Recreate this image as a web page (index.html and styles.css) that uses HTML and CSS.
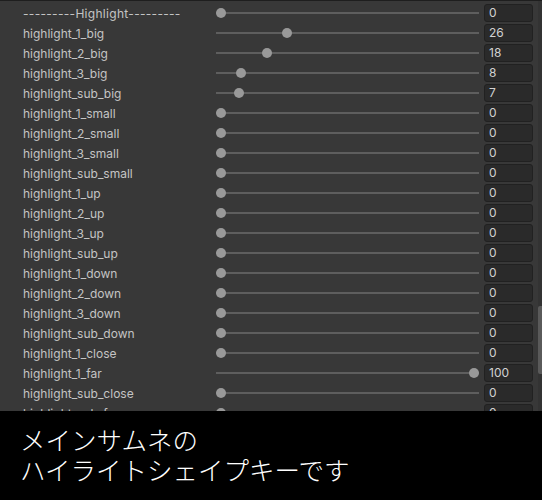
FILE: index.html
```html
<!DOCTYPE html>
<html lang="ja">
<head>
<meta charset="utf-8">
<link rel="stylesheet" href="styles.css">
</head>
<body>
<div class="screen">
  <div class="panel">
    <div class="list">
      <div class="row"><span class="label header">---------Highlight---------</span><div class="slider"><div class="track"></div><div class="thumb" style="--v:0"></div></div><div class="field">0</div></div>
      <div class="row"><span class="label">highlight_1_big</span><div class="slider"><div class="track"></div><div class="thumb" style="--v:26"></div></div><div class="field">26</div></div>
      <div class="row"><span class="label">highlight_2_big</span><div class="slider"><div class="track"></div><div class="thumb" style="--v:18"></div></div><div class="field">18</div></div>
      <div class="row"><span class="label">highlight_3_big</span><div class="slider"><div class="track"></div><div class="thumb" style="--v:8"></div></div><div class="field">8</div></div>
      <div class="row"><span class="label">highlight_sub_big</span><div class="slider"><div class="track"></div><div class="thumb" style="--v:7"></div></div><div class="field">7</div></div>
      <div class="row"><span class="label">highlight_1_small</span><div class="slider"><div class="track"></div><div class="thumb" style="--v:0"></div></div><div class="field">0</div></div>
      <div class="row"><span class="label">highlight_2_small</span><div class="slider"><div class="track"></div><div class="thumb" style="--v:0"></div></div><div class="field">0</div></div>
      <div class="row"><span class="label">highlight_3_small</span><div class="slider"><div class="track"></div><div class="thumb" style="--v:0"></div></div><div class="field">0</div></div>
      <div class="row"><span class="label">highlight_sub_small</span><div class="slider"><div class="track"></div><div class="thumb" style="--v:0"></div></div><div class="field">0</div></div>
      <div class="row"><span class="label">highlight_1_up</span><div class="slider"><div class="track"></div><div class="thumb" style="--v:0"></div></div><div class="field">0</div></div>
      <div class="row"><span class="label">highlight_2_up</span><div class="slider"><div class="track"></div><div class="thumb" style="--v:0"></div></div><div class="field">0</div></div>
      <div class="row"><span class="label">highlight_3_up</span><div class="slider"><div class="track"></div><div class="thumb" style="--v:0"></div></div><div class="field">0</div></div>
      <div class="row"><span class="label">highlight_sub_up</span><div class="slider"><div class="track"></div><div class="thumb" style="--v:0"></div></div><div class="field">0</div></div>
      <div class="row"><span class="label">highlight_1_down</span><div class="slider"><div class="track"></div><div class="thumb" style="--v:0"></div></div><div class="field">0</div></div>
      <div class="row"><span class="label">highlight_2_down</span><div class="slider"><div class="track"></div><div class="thumb" style="--v:0"></div></div><div class="field">0</div></div>
      <div class="row"><span class="label">highlight_3_down</span><div class="slider"><div class="track"></div><div class="thumb" style="--v:0"></div></div><div class="field">0</div></div>
      <div class="row"><span class="label">highlight_sub_down</span><div class="slider"><div class="track"></div><div class="thumb" style="--v:0"></div></div><div class="field">0</div></div>
      <div class="row"><span class="label">highlight_1_close</span><div class="slider"><div class="track"></div><div class="thumb" style="--v:0"></div></div><div class="field">0</div></div>
      <div class="row"><span class="label">highlight_1_far</span><div class="slider"><div class="track"></div><div class="thumb" style="--v:100"></div></div><div class="field">100</div></div>
      <div class="row"><span class="label">highlight_sub_close</span><div class="slider"><div class="track"></div><div class="thumb" style="--v:0"></div></div><div class="field">0</div></div>
      <div class="row"><span class="label">highlight_sub_far</span><div class="slider"><div class="track"></div><div class="thumb" style="--v:0"></div></div><div class="field">0</div></div>
    </div>
    <div class="scrollbar"><div class="scroll-thumb"></div></div>
  </div>
  <div class="caption">
    <p>メインサムネの</p>
    <p>ハイライトシェイプキーです</p>
  </div>
</div>
</body>
</html>
```
FILE: styles.css
```css
* { box-sizing: border-box; }
html, body { margin: 0; padding: 0; background: #000; }
.screen {
  width: 542px;
  height: 500px;
  overflow: hidden;
  display: flex;
  flex-direction: column;
}
.panel {
  height: 411px;
  flex: none;
  background: #383838;
  border-top: 1px solid #1e1e1e;
  display: flex;
  overflow: hidden;
}
.list {
  flex: 1;
  padding-top: 2px;
}
.row {
  height: 20px;
  display: grid;
  grid-template-columns: 188px 263px 49px;
  column-gap: 5px;
  align-items: center;
  padding-left: 23px;
}
.label {
  font-family: Inter, "Liberation Sans", sans-serif;
  font-size: 12px;
  color: #c4c4c4;
  white-space: nowrap;
}
.label.header {
  letter-spacing: 0.3px;
}
.slider {
  position: relative;
  height: 10px;
}
.track {
  position: absolute;
  left: 0;
  right: 0;
  top: 4px;
  height: 2px;
  background: #5e5e5e;
}
.thumb {
  position: absolute;
  top: 0;
  left: calc((100% - 10px) * var(--v) / 100);
  width: 10px;
  height: 10px;
  border-radius: 50%;
  background: #999999;
}
.field {
  height: 18px;
  background: #2a2a2a;
  border: 1px solid #212121;
  border-radius: 3px;
  font-family: Inter, "Liberation Sans", sans-serif;
  font-size: 12px;
  line-height: 16px;
  color: #d2d2d2;
  padding-left: 4px;
}
.scrollbar {
  width: 4px;
  flex: none;
  background: #333333;
  padding-top: 305px;
}
.scroll-thumb {
  height: 68px;
  background: #5a5a5a;
  border-radius: 2px 0 0 2px;
}
.caption {
  flex: 1;
  background: #000;
  padding: 13px 0 0 20px;
  font-family: "Noto Sans CJK JP", sans-serif;
  font-weight: 300;
  font-size: 25.5px;
  line-height: 30px;
  color: #ffffff;
}
.caption p { margin: 0; }
```
